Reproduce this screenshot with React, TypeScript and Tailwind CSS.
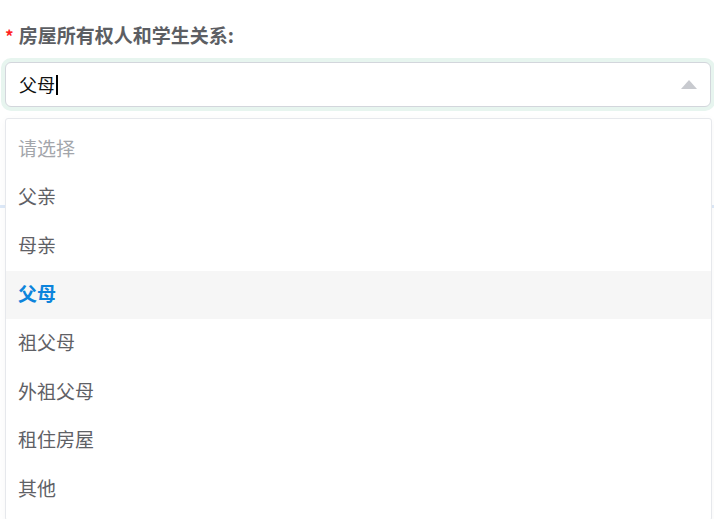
import React from "react";

const OPTIONS = ["父亲", "母亲", "父母", "祖父母", "外祖父母", "租住房屋", "其他"];
const SELECTED = "父母";

export default function App() {
  return (
    <div className="relative w-[714px] h-[519px] overflow-hidden bg-white font-['Noto_Sans_CJK_SC',sans-serif]">
      {/* form row */}
      <div className="pt-[23px]">
        <div className="flex items-center h-[22px] pl-[5px] gap-[5px]">
          <span className="text-[#ff1f1f] text-[17px] font-bold leading-none mt-[2px]">*</span>
          <span className="text-[#5c5e63] text-[19px] font-bold leading-none">房屋所有权人和学生关系:</span>
        </div>
        <div className="mt-[17px] ml-[5px] w-[706px] h-[45px] rounded-[6px] border border-[#d3d6dc] ring-4 ring-[#e7f5ef] bg-white flex items-center pl-[13px] pr-[13px]">
          <span className="text-[#111] text-[18px] leading-none mb-[1px]">父母</span>
          <span className="ml-[1px] w-[1.5px] h-[20px] bg-black" />
          <div className="flex-1" />
          <svg width="16" height="9" viewBox="0 0 16 9">
            <polygon points="8,0 16,9 0,9" fill="#c8cacf" />
          </svg>
        </div>
      </div>

      {/* content behind the popup */}
      <div className="mt-[62px] h-[39px] border-b-[3px] border-[#dde9f8]" />

      {/* dropdown popup */}
      <div className="absolute top-[118px] left-[5px] w-[707px] bg-white border border-[#e6e8ec] rounded-[3px] pt-[6px] pb-[6px] shadow-[0_2px_8px_rgba(0,0,0,0.04)]">
        <div className="h-[48.6px] flex items-center pl-[12px] pb-[3px] text-[19px] text-[#a3a6ab]">请选择</div>
        {OPTIONS.map((o) => (
          <div
            key={o}
            className={`h-[48.6px] flex items-center pl-[12px] pb-[3px] text-[19px] ${
              o === SELECTED ? "bg-[#f6f6f6] text-[#0c84dc] font-bold" : "text-[#5f6166]"
            }`}
          >
            {o}
          </div>
        ))}
      </div>
    </div>
  );
}
